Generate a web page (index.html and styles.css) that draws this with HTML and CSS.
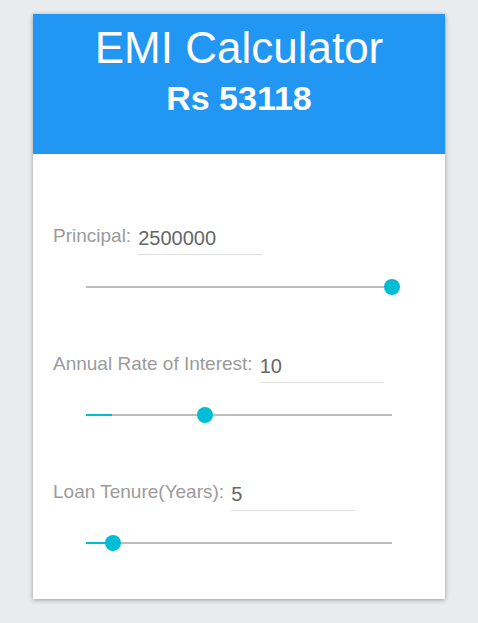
FILE: index.html
```html
<!DOCTYPE html>
<html lang="en">
<head>
<meta charset="utf-8">
<title>EMI Calculator</title>
<link rel="stylesheet" href="styles.css">
</head>
<body>
  <div class="card">
    <header class="card-header">
      <h1 class="title">EMI Calculator</h1>
      <div class="emi">Rs 53118</div>
    </header>
    <div class="card-body">
      <div class="group">
        <div class="field">
          <span class="label">Principal:</span>
          <span class="value">2500000</span>
        </div>
        <div class="slider">
          <div class="track">
            <div class="fill" style="width:0px"></div>
          </div>
          <div class="thumb" style="left:306px"></div>
        </div>
      </div>
      <div class="group">
        <div class="field">
          <span class="label">Annual Rate of Interest:</span>
          <span class="value">10</span>
        </div>
        <div class="slider">
          <div class="track">
            <div class="fill" style="width:26px"></div>
          </div>
          <div class="thumb" style="left:119px"></div>
        </div>
      </div>
      <div class="group">
        <div class="field">
          <span class="label">Loan Tenure(Years):</span>
          <span class="value">5</span>
        </div>
        <div class="slider">
          <div class="track">
            <div class="fill" style="width:27px"></div>
          </div>
          <div class="thumb" style="left:27px"></div>
        </div>
      </div>
    </div>
  </div>
</body>
</html>
```

FILE: styles.css
```css
html, body {
  margin: 0;
  padding: 0;
}

body {
  background: #e9ecef;
  font-family: "Liberation Sans", Arial, sans-serif;
  padding: 14px 33px 24px;
}

.card {
  background: #ffffff;
  box-shadow: 0 1px 6px rgba(0, 0, 0, 0.12), 0 1px 4px rgba(0, 0, 0, 0.24);
}

.card-header {
  background: #2196f3;
  color: #ffffff;
  height: 140px;
  box-sizing: border-box;
  padding-top: 9px;
  text-align: center;
}

.title {
  margin: 0;
  font-size: 44px;
  line-height: 50px;
  font-weight: 400;
}

.emi {
  margin-top: 5px;
  font-size: 34px;
  line-height: 40px;
  font-weight: 700;
}

.card-body {
  padding: 70px 20px 48px;
}

.group + .group {
  margin-top: 57px;
}

.field {
  display: flex;
  align-items: flex-end;
}

.label {
  font-size: 19px;
  line-height: 24px;
  color: #9b9b9b;
  margin-right: 7px;
  margin-bottom: 7px;
  white-space: nowrap;
}

.value {
  width: 124px;
  font-size: 20px;
  line-height: 24px;
  color: #666666;
  padding-bottom: 4px;
  border-bottom: 1px solid #e0e0e0;
}

.slider {
  position: relative;
  height: 16px;
  margin: 24px 33px 0;
}

.track {
  position: absolute;
  left: 0;
  right: 0;
  top: 7px;
  height: 2px;
  background: #bdbdbd;
}

.fill {
  height: 100%;
  background: #00bcd4;
}

.thumb {
  position: absolute;
  top: 0;
  width: 16px;
  height: 16px;
  margin-left: -8px;
  border-radius: 50%;
  background: #00bcd4;
}
```
